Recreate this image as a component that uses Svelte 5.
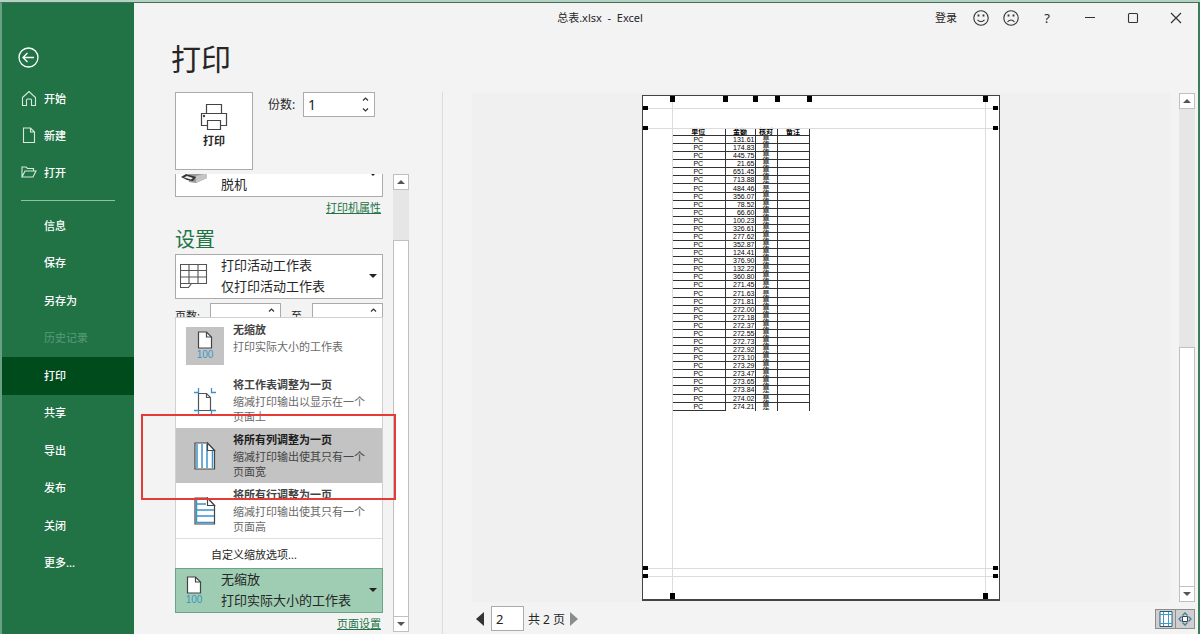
<script lang="ts">
  type Command = { label: string; icon?: string; disabled?: boolean };

  const topCommands: Command[] = [
    { label: '开始', icon: 'home' },
    { label: '新建', icon: 'file' },
    { label: '打开', icon: 'folder' },
  ];

  const commands: Command[] = [
    { label: '信息' },
    { label: '保存' },
    { label: '另存为' },
    { label: '历史记录', disabled: true },
    { label: '打印' },
    { label: '共享' },
    { label: '导出' },
    { label: '发布' },
    { label: '关闭' },
    { label: '更多...' },
  ];

  const scaleOptions = [
    { icon: 'none', title: '无缩放', text: '打印实际大小的工作表' },
    { icon: 'sheet', title: '将工作表调整为一页', text: '缩减打印输出以显示在一个页面上' },
    { icon: 'cols', title: '将所有列调整为一页', text: '缩减打印输出使其只有一个页面宽' },
    { icon: 'rows', title: '将所有行调整为一页', text: '缩减打印输出使其只有一个页面高' },
  ];

  const amounts = [
    '131.61', '174.83', '445.75', '21.65', '651.45', '713.88', '484.46', '356.07', '78.52',
    '66.60', '100.23', '326.61', '277.62', '352.87', '124.41', '376.90', '132.22', '360.80',
    '271.45', '271.63', '271.81', '272.00', '272.18', '272.37', '272.55', '272.73', '272.92',
    '273.10', '273.29', '273.47', '273.65', '273.84', '274.02', '274.21',
  ];

  // margin and column handles, measured from the paper's corner
  const topHandles = [30, 83, 113, 135, 167, 343];
  const bottomHandles = [30, 343];
  const sideHandles = [13, 33, 473, 481];

  let active = $state('打印');
  let hovered = $state(2);
  let menuOpen = $state(true);
  let copies = $state('1');
  let pageFrom = $state('');
  let pageTo = $state('');
  let currentPage = $state('2');
</script>

{#snippet pageIcon()}
  <svg width="16" height="18" viewBox="0 0 16 18">
    <path d="M1.500 1h8l5 5v11h-13z" fill="#fff" stroke="#444" stroke-width="1.2" />
    <path d="M9.500 1v5h5" fill="none" stroke="#444" stroke-width="1.2" />
  </svg>
  <span class="hundred">100</span>
{/snippet}

{#snippet scaleIcon(name: string)}
  {#if name === 'none'}
    {@render pageIcon()}
  {:else if name === 'sheet'}
    <svg width="24" height="28" viewBox="0 0 24 28">
      <path d="M5.500 6.500h8l4 4v13h-12z" fill="#fff" stroke="#555" stroke-width="1.2" />
      <path d="M13.500 6.500v4h4" fill="none" stroke="#555" stroke-width="1.2" />
      <path d="M1 5.500h4.500V1M23 5.500h-4.500V1M1 23.500h4.500V28M23 23.500h-4.500V28" fill="none" stroke="#3b93c9" stroke-width="1.300" />
    </svg>
  {:else}
    <svg width="22" height="28" viewBox="0 0 22 28">
      <path d="M1 1h12.500l7 7.500v18.500h-19.500z" fill="#fff" stroke="#444" stroke-width="1.2" />
      {#if name === 'cols'}
        <path d="M3 2v24M8 2v24M13 2v24M18.500 9v17" fill="none" stroke="#3b93c9" stroke-width="1.500" />
      {:else}
        <path d="M2.500 2v24M2 7h10M2 13h18M2 19h18M2 25.500h18" fill="none" stroke="#3b93c9" stroke-width="1.500" />
      {/if}
      <path d="M13.500 1v7.500h7z" fill="#fff" stroke="#444" stroke-width="1.2" />
    </svg>
  {/if}
{/snippet}

{#snippet scrollbar(before: number, thumb: number)}
  <div class="scrollbar">
    <button type="button" aria-label="向上滚动"><i class="tri up"></i></button>
    <div class="track" style="flex-grow: {before}"></div>
    <div class="thumb" style="flex-grow: {thumb}"></div>
    <button type="button" aria-label="向下滚动"><i class="tri down"></i></button>
  </div>
{/snippet}

<div class="window">
  <nav class="sidebar">
    <button type="button" class="back" aria-label="返回">
      <svg width="21" height="21" viewBox="0 0 21 21" fill="none" stroke="#fff" stroke-width="1.3">
        <circle cx="10.500" cy="10.500" r="9.500" />
        <path d="M16 10.500H5.500M9.500 6l-4.500 4.500 4.500 4.500" />
      </svg>
    </button>

    <div class="group top">
      {#each topCommands as item}
        <button type="button" class="item" onclick={() => (active = item.label)}>
          <svg width="16" height="16" viewBox="0 0 16 16" fill="none" stroke="#d5eadd" stroke-width="1.1">
            {#if item.icon === 'home'}
              <path d="M1.500 7.500 8 1.500l6.500 6v8h-4V10a1 1 0 0 0-1-1h-3a1 1 0 0 0-1 1v5.500h-4z" />
            {:else if item.icon === 'file'}
              <path d="M2.500 1h7l4 4v10.500h-11zM9.500 1v4h4" />
            {:else}
              <path d="M1 13V3h4l1.500 1.500h6V7M1 13l3-6h11l-3 6z" />
            {/if}
          </svg>
          {item.label}
        </button>
      {/each}
    </div>

    <hr />

    <div class="group rest">
      {#each commands as item}
        <button
          type="button"
          class="item plain"
          class:active={active === item.label}
          disabled={item.disabled}
          onclick={() => (active = item.label)}
        >
          {item.label}
        </button>
      {/each}
    </div>
  </nav>

  <div class="content">
    <header class="titlebar">
      <div class="doc-title">总表.xlsx&nbsp; -&nbsp; Excel</div>
      <div class="window-tools">
        <button type="button" class="login">登录</button>
        <button type="button" class="face" aria-label="微笑">
          <svg width="16" height="16" viewBox="0 0 16 16" fill="none" stroke="#333" stroke-width="1.1">
            <circle cx="8" cy="8" r="7.200" />
            <path d="M4.500 9.800q3.500 3.400 7 0" />
            <path d="M5.500 4.500v2M10.500 4.500v2" stroke-width="1.800" />
          </svg>
        </button>
        <button type="button" class="face" aria-label="哭脸">
          <svg width="16" height="16" viewBox="0 0 16 16" fill="none" stroke="#333" stroke-width="1.1">
            <circle cx="8" cy="8" r="7.200" />
            <path d="M4.500 11.800q3.500-3.600 7 0" />
            <path d="M5.500 4.500v2M10.500 4.500v2" stroke-width="1.800" />
          </svg>
        </button>
        <button type="button" class="help">?</button>
        <button type="button" class="win" aria-label="最小化">
          <svg width="12" height="12" viewBox="0 0 12 12" stroke="#333"><path d="M1 5.500h10" /></svg>
        </button>
        <button type="button" class="win" aria-label="最大化">
          <svg width="12" height="12" viewBox="0 0 12 12" fill="none" stroke="#333" stroke-width="1.1"><rect x="1.500" y="1.500" width="9" height="9" rx="1" /></svg>
        </button>
        <button type="button" class="win" aria-label="关闭窗口">
          <svg width="12" height="12" viewBox="0 0 12 12" stroke="#333" stroke-width="1.2"><path d="M1 1l10 10M11 1L1 11" /></svg>
        </button>
      </div>
    </header>

    <h1>打印</h1>

    <div class="body">
      <section class="options">
        <div class="print-row">
          <button type="button" class="print">
            <svg width="28" height="28" viewBox="0 0 28 28" fill="#fff" stroke="#444" stroke-width="1.2">
              <path d="M6.500 10V1.500h15V10" />
              <path d="M1.500 10.500h25v12h-25z" />
              <path d="M7.500 17.500h13v9h-13z" />
              <circle cx="4" cy="13" r=".6" fill="#222" />
            </svg>
            打印
          </button>
          <label for="copies">份数:</label>
          <div class="spin copies">
            <input id="copies" bind:value={copies} />
            <span class="arrows">
              <svg width="7" height="4" viewBox="0 0 7 4"><path d="M1 3.500 3.500 1 6 3.500" /></svg>
              <svg width="7" height="4" viewBox="0 0 7 4"><path d="M1 .5 3.500 3 6 .5" /></svg>
            </span>
          </div>
        </div>

        <div class="scroll-row">
          <div class="settings">
            <button type="button" class="picker printer" aria-haspopup="listbox">
              <span class="picker-icon">
                <svg width="28" height="24" viewBox="0 0 28 24">
                  <path d="M8 10l12-2 7 3v5l-11 5-7-1z" fill="#9a9a9a" />
                  <path d="M16 14l11-3v5l-11 5z" fill="#c4c4c4" />
                  <path d="M1 15l5-3 10 3-3 4-6-1z" fill="#333" />
                  <path d="M4 15.500l3-1.500 6 2-2 1.500z" fill="#eee" />
                </svg>
              </span>
              <span class="picker-text"><span>脱机</span></span>
              <i class="tri dark"></i>
            </button>
            <a class="link" href="#printer">打印机属性</a>

            <h2>设置</h2>
            <button type="button" class="picker" aria-haspopup="listbox">
              <span class="picker-icon">
                <svg width="28" height="26" viewBox="0 0 28 26" fill="none" stroke="#555" stroke-width="1.100">
                  <path d="M.500 1.500h26v19H11.500l-3 4h-8z" fill="#fff" />
                  <path d="M.500 7.500h26M.500 14h26M.500 20.500h11M9 1.500v19M18 1.500v19" />
                </svg>
              </span>
              <span class="picker-text"><span>打印活动工作表</span><span>仅打印活动工作表</span></span>
              <i class="tri dark"></i>
            </button>

            <div class="pages">
              <label for="page-from">页数:</label>
              <div class="spin">
                <input id="page-from" bind:value={pageFrom} />
                <span class="arrows"><svg width="7" height="4" viewBox="0 0 7 4"><path d="M1 3.500 3.500 1 6 3.500" /></svg></span>
              </div>
              <label for="page-to">至</label>
              <div class="spin">
                <input id="page-to" bind:value={pageTo} />
                <span class="arrows"><svg width="7" height="4" viewBox="0 0 7 4"><path d="M1 3.500 3.500 1 6 3.500" /></svg></span>
              </div>
            </div>

            <div class="scale">
              {#if menuOpen}
                <div class="menu" role="listbox" aria-label="缩放">
                  {#each scaleOptions as option, i}
                    <button
                      type="button"
                      class="option"
                      class:hovered={hovered === i}
                      role="option"
                      aria-selected={i === 0}
                      onmouseenter={() => (hovered = i)}
                    >
                      <span class="option-icon" class:selected={i === 0}>{@render scaleIcon(option.icon)}</span>
                      <span class="option-text">
                        <strong>{option.title}</strong>
                        <span>{option.text}</span>
                      </span>
                    </button>
                  {/each}
                  <button type="button" class="custom">自定义缩放选项...</button>
                </div>
              {/if}
              <button
                type="button"
                class="picker current"
                aria-haspopup="listbox"
                aria-expanded={menuOpen}
                onclick={() => (menuOpen = !menuOpen)}
              >
                <span class="picker-icon">{@render pageIcon()}</span>
                <span class="picker-text"><span>无缩放</span><span>打印实际大小的工作表</span></span>
                <i class="tri dark"></i>
              </button>
            </div>
            <a class="link" href="#page-setup">页面设置</a>
          </div>
          {@render scrollbar(50, 377)}
        </div>

        <div class="highlight"></div>
      </section>

      <section class="preview">
        <div class="canvas-row">
          <div class="canvas">
            <div class="paper">
              <table>
                <colgroup>
                  <col class="unit" />
                  <col class="amount" />
                  <col class="check" />
                  <col class="note" />
                </colgroup>
                <thead>
                  <tr><th>单位</th><th>金额</th><th>核对</th><th>备注</th></tr>
                </thead>
                <tbody>
                  {#each amounts as amount}
                    <tr><td>PC</td><td class="num">{amount}</td><td>是</td><td></td></tr>
                  {/each}
                </tbody>
              </table>

              {#each sideHandles as y}
                <i class="guide across" style="top: {y}px"></i>
                <i class="handle side left" style="top: {y}px"></i>
                <i class="handle side right" style="top: {y}px"></i>
              {/each}
              {#each bottomHandles as x}
                <i class="guide down" style="left: {x}px"></i>
                <i class="handle bottom" style="left: {x}px"></i>
              {/each}
              {#each topHandles as x}
                <i class="handle above" style="left: {x}px"></i>
              {/each}
            </div>
          </div>
          {@render scrollbar(239, 239)}
        </div>

        <footer>
          <button type="button" class="step" aria-label="上一页">
            <svg width="8" height="14" viewBox="0 0 8 14"><path d="M8 0v14L0 7z" fill="#333" /></svg>
          </button>
          <input aria-label="当前页" bind:value={currentPage} />
          <span class="total">共 2 页</span>
          <button type="button" class="step" aria-label="下一页">
            <svg width="8" height="14" viewBox="0 0 8 14"><path d="M0 0v14l8-7z" fill="#8c8c8c" /></svg>
          </button>
          <div class="view-tools">
            <button type="button" aria-label="显示边距">
              <svg width="14" height="16" viewBox="0 0 14 16">
                <path d="M1 .5h12v15H1z" fill="#fff" stroke="#2c5876" />
                <path d="M4.500 1v14M9.500 1v14M1 3.500h12M1 12.500h12" stroke="#3b9bd0" fill="none" />
              </svg>
            </button>
            <button type="button" aria-label="缩放到页面">
              <svg width="14" height="14" viewBox="0 0 14 14">
                <path d="M4.500 3.500 7 1l2.500 2.500M4.500 10.500 7 13l2.500-2.500M3.500 4.500 1 7l2.500 2.500M10.500 4.500 13 7l-2.500 2.500" fill="none" stroke="#3b7ea6" stroke-width="1.300" />
                <path d="M4.500 4.500h5v5h-5z" fill="#fff" stroke="#444" />
              </svg>
            </button>
          </div>
        </footer>
      </section>
    </div>
  </div>
</div>

<style>
  :global(body) {
    margin: 0;
  }

  .window {
    display: flex;
    height: 100vh;
    box-sizing: border-box;
    overflow: hidden;
    border-top: 2px solid #b4d2c3;
    background: #f3f3f3;
    color: #262626;
    font-family: 'Noto Sans', 'Noto Sans CJK SC', sans-serif;
    font-size: 11px;
  }

  button {
    margin: 0;
    padding: 0;
    border: none;
    background: none;
    color: inherit;
    font: inherit;
  }

  input {
    box-sizing: border-box;
    min-width: 0;
    border: none;
    background: #fff;
    color: #222;
    font: inherit;
    font-size: 14px;
    outline: none;
  }

  svg {
    display: block;
    flex-shrink: 0;
  }

  /* 侧边栏 */
  .sidebar {
    display: flex;
    flex-direction: column;
    flex-shrink: 0;
    width: 132px;
    border-top: 1px solid #447059;
    border-left: 2px solid #69a184;
    background: #217346;
    color: #fff;
  }

  .back {
    width: 21px;
    margin: 44px 0 12px 16px;
  }

  .group {
    display: grid;
    grid-auto-rows: 1fr;
  }

  .top {
    height: 112px;
  }

  .rest {
    height: 375px;
  }

  .item {
    display: flex;
    align-items: center;
    gap: 7px;
    padding: 0 0 2px 19px;
    font-weight: 500;
    text-align: left;
  }

  .plain {
    padding-left: 42px;
  }

  .item.active {
    background: #004b1c;
  }

  .item:disabled {
    color: #4f9570;
  }

  hr {
    width: 94px;
    height: 1px;
    margin: 8px 0 6px 19px;
    border: none;
    background: #8fc3a5;
  }

  /* 标题栏 */
  .content {
    display: flex;
    flex-direction: column;
    flex: 1;
    min-width: 0;
    border-top: 1px solid #447059;
    border-right: 2px solid #3b7c5a;
  }

  .titlebar {
    display: flex;
    align-items: center;
    height: 29px;
    line-height: 16px;
  }

  .doc-title {
    flex: 1;
    padding-left: 132px;
    text-align: center;
  }

  .window-tools {
    display: flex;
    align-items: center;
    width: 264px;
  }

  .login {
    width: 24px;
    margin-right: 8px;
  }

  .face {
    display: grid;
    place-items: center;
    width: 30px;
  }

  .help {
    width: 42px;
    font-size: 13px;
  }

  .win {
    display: grid;
    place-items: center;
    width: 43px;
    height: 29px;
  }

  h1 {
    margin: 0;
    padding: 0 0 6px 37px;
    font-size: 30px;
    font-weight: 400;
    line-height: 54px;
  }

  .body {
    display: flex;
    flex: 1;
    min-height: 0;
  }

  /* 打印选项 */
  .options {
    position: relative;
    display: flex;
    flex-direction: column;
    flex-shrink: 0;
    box-sizing: border-box;
    width: 309px;
    padding-left: 41px;
    border-right: 1px solid #dcdcdc;
  }

  .print-row {
    display: flex;
    align-items: flex-start;
    margin-bottom: 4px;
  }

  .print {
    display: flex;
    flex-direction: column;
    align-items: center;
    gap: 3px;
    box-sizing: border-box;
    width: 78px;
    height: 78px;
    padding-top: 10px;
    border: 1px solid #ababab;
    background: #fff;
    font-weight: 700;
    line-height: 14px;
  }

  .print-row label {
    width: 35px;
    margin-left: 15px;
    font-size: 12px;
    line-height: 25px;
  }

  .spin {
    display: flex;
    box-sizing: border-box;
    width: 71px;
    height: 25px;
    border: 1px solid #ababab;
    background: #fff;
  }

  .spin.copies {
    width: 72px;
  }

  .spin input {
    flex: 1;
    padding: 0 0 0 4px;
  }

  .arrows {
    display: flex;
    flex-direction: column;
    justify-content: space-between;
    padding: 4px 5px;
  }

  .arrows path {
    fill: none;
    stroke: #333;
    stroke-width: 1.2;
  }

  .scroll-row {
    display: flex;
    flex: 1;
    gap: 10px;
    min-height: 0;
    padding-bottom: 2px;
  }

  .settings {
    display: flex;
    flex-direction: column;
    width: 208px;
    overflow: hidden;
  }

  .picker {
    display: flex;
    align-items: center;
    flex-shrink: 0;
    box-sizing: border-box;
    width: 100%;
    height: 45px;
    padding-bottom: 1px;
    border: 1px solid #ababab;
    background: #fff;
    font-size: 13px;
    text-align: left;
  }

  .printer {
    margin-top: -22px;
  }

  .picker-icon {
    display: flex;
    flex-direction: column;
    align-items: center;
    width: 36px;
  }

  .picker-text {
    display: flex;
    flex-direction: column;
    flex: 1;
    padding-left: 9px;
    line-height: 21px;
  }

  .printer .picker-text {
    align-self: flex-end;
  }

  .tri {
    border: 4px solid transparent;
  }

  .tri.up {
    border-top: none;
    border-bottom-color: #555;
  }

  .tri.down {
    border-bottom: none;
    border-top-color: #555;
  }

  .tri.dark {
    margin-right: 5px;
    border-bottom: none;
    border-top-color: #222;
  }

  .link {
    align-self: flex-end;
    margin: 2px 2px 0 0;
    color: #217346;
    line-height: 17px;
  }

  h2 {
    margin: 10px 0 0;
    color: #217346;
    font-size: 20px;
    font-weight: 400;
    line-height: 28px;
  }

  .pages {
    display: flex;
    align-items: center;
    justify-content: space-between;
    margin-top: 4px;
    line-height: 23px;
  }

  .scale {
    position: relative;
    margin-top: auto;
  }

  .menu {
    position: absolute;
    bottom: 100%;
    left: 0;
    right: 0;
    border: 1px solid #d0d0d0;
    border-width: 1px 1px 0;
    background: #fff;
  }

  .option {
    display: flex;
    align-items: center;
    box-sizing: border-box;
    width: 100%;
    height: 55px;
    padding: 0 8px 0 10px;
    text-align: left;
  }

  .option.hovered {
    background: #c3c3c3;
  }

  .option-icon {
    display: flex;
    flex-direction: column;
    align-items: center;
    justify-content: center;
    flex-shrink: 0;
    width: 38px;
    height: 38px;
  }

  .option-icon.selected {
    background: #c3c3c3;
  }

  .option-text {
    display: flex;
    flex-direction: column;
    align-self: flex-start;
    gap: 1px;
    padding: 3px 0 0 9px;
    color: #6a6a6a;
    line-height: 15px;
  }

  .option-text strong {
    color: #444;
    line-height: 17px;
  }

  .hovered .option-text {
    color: #444;
  }

  .hovered strong {
    color: #1c1c1c;
  }

  .hundred {
    color: #3b93c9;
    font-family: 'Liberation Sans', sans-serif;
    font-size: 10px;
    line-height: 11px;
  }

  .custom {
    width: 100%;
    height: 30px;
    padding-left: 35px;
    border-top: 1px solid #dedede;
    text-align: left;
  }

  .current {
    border-color: #6ba386;
    background: #9fcdb3;
  }

  .highlight {
    position: absolute;
    top: 322px;
    left: 7px;
    right: 46px;
    height: 82px;
    border: 2px solid #e53a36;
    pointer-events: none;
  }

  /* 滚动条 */
  .scrollbar {
    display: flex;
    flex-direction: column;
    flex-shrink: 0;
    width: 16px;
    background: #e6e6e6;
  }

  .scrollbar button {
    display: grid;
    place-items: center;
    height: 16px;
    border: 1px solid #c0c0c0;
    background: #fff;
  }

  .thumb {
    border: 1px solid #c0c0c0;
    border-width: 1px 1px 0;
    background: #fff;
  }

  /* 预览 */
  .preview {
    display: flex;
    flex-direction: column;
    flex: 1;
    min-width: 0;
    padding: 1px 3px 0 29px;
  }

  .canvas-row {
    display: flex;
    flex: 1;
    gap: 9px;
    min-height: 0;
  }

  .canvas {
    display: flex;
    justify-content: center;
    flex: 1;
    padding: 2px 0 1px;
    background: #f0f0f0;
  }

  .paper {
    position: relative;
    box-sizing: border-box;
    width: 358px;
    padding: 32px 0 0 29px;
    border: 1px solid #444;
    border-bottom-width: 2px;
    background: #fff;
  }

  table {
    width: 137px;
    height: 283px;
    border-collapse: collapse;
    table-layout: fixed;
    color: #000;
    font-family: 'Liberation Sans', 'Noto Sans CJK SC', sans-serif;
    font-size: 7px;
    line-height: 7px;
    text-align: center;
  }

  th,
  td {
    padding: 0;
    border: 1px solid #333;
    white-space: nowrap;
  }

  th {
    border-top: none;
  }

  th:first-child,
  td:first-child {
    border-left: none;
  }

  tr:last-child td:not(:first-child) {
    border-bottom: none;
  }

  .unit {
    width: 53px;
  }

  .amount {
    width: 30px;
  }

  .check {
    width: 22px;
  }

  .note {
    width: 32px;
  }

  .num {
    text-align: right;
  }

  .guide,
  .handle {
    position: absolute;
  }

  .guide.across {
    left: 0;
    right: 0;
    height: 1px;
    margin-top: -1px;
    background: #d9dce0;
  }

  .guide.down {
    top: 0;
    bottom: 0;
    width: 1px;
    margin-left: -1px;
    background: #d9dce0;
  }

  .handle {
    width: 5px;
    height: 6px;
    margin-left: -3px;
    background: #000;
  }

  .handle.above {
    top: 0;
  }

  .handle.bottom {
    bottom: 0;
  }

  .handle.side {
    height: 4px;
    margin: -3px 0 0;
  }

  .handle.left {
    left: 0;
  }

  .handle.right {
    right: 1px;
  }

  footer {
    display: flex;
    align-items: center;
    gap: 4px;
    height: 31px;
    padding: 1px 0 0 4px;
  }

  .step {
    width: 8px;
  }

  footer input {
    width: 33px;
    height: 25px;
    margin-left: 3px;
    padding: 0 0 0 4px;
    border: 1px solid #ababab;
    font-size: 13px;
  }

  .total {
    margin-right: 1px;
    font-size: 12px;
  }

  .view-tools {
    display: flex;
    margin-left: auto;
    border: 1px solid #8c8c8c;
  }

  .view-tools button {
    display: grid;
    place-items: center;
    width: 19px;
    height: 18px;
    background: #cfcfcf;
  }

  .view-tools button + button {
    border-left: 1px solid #8c8c8c;
  }
</style>
